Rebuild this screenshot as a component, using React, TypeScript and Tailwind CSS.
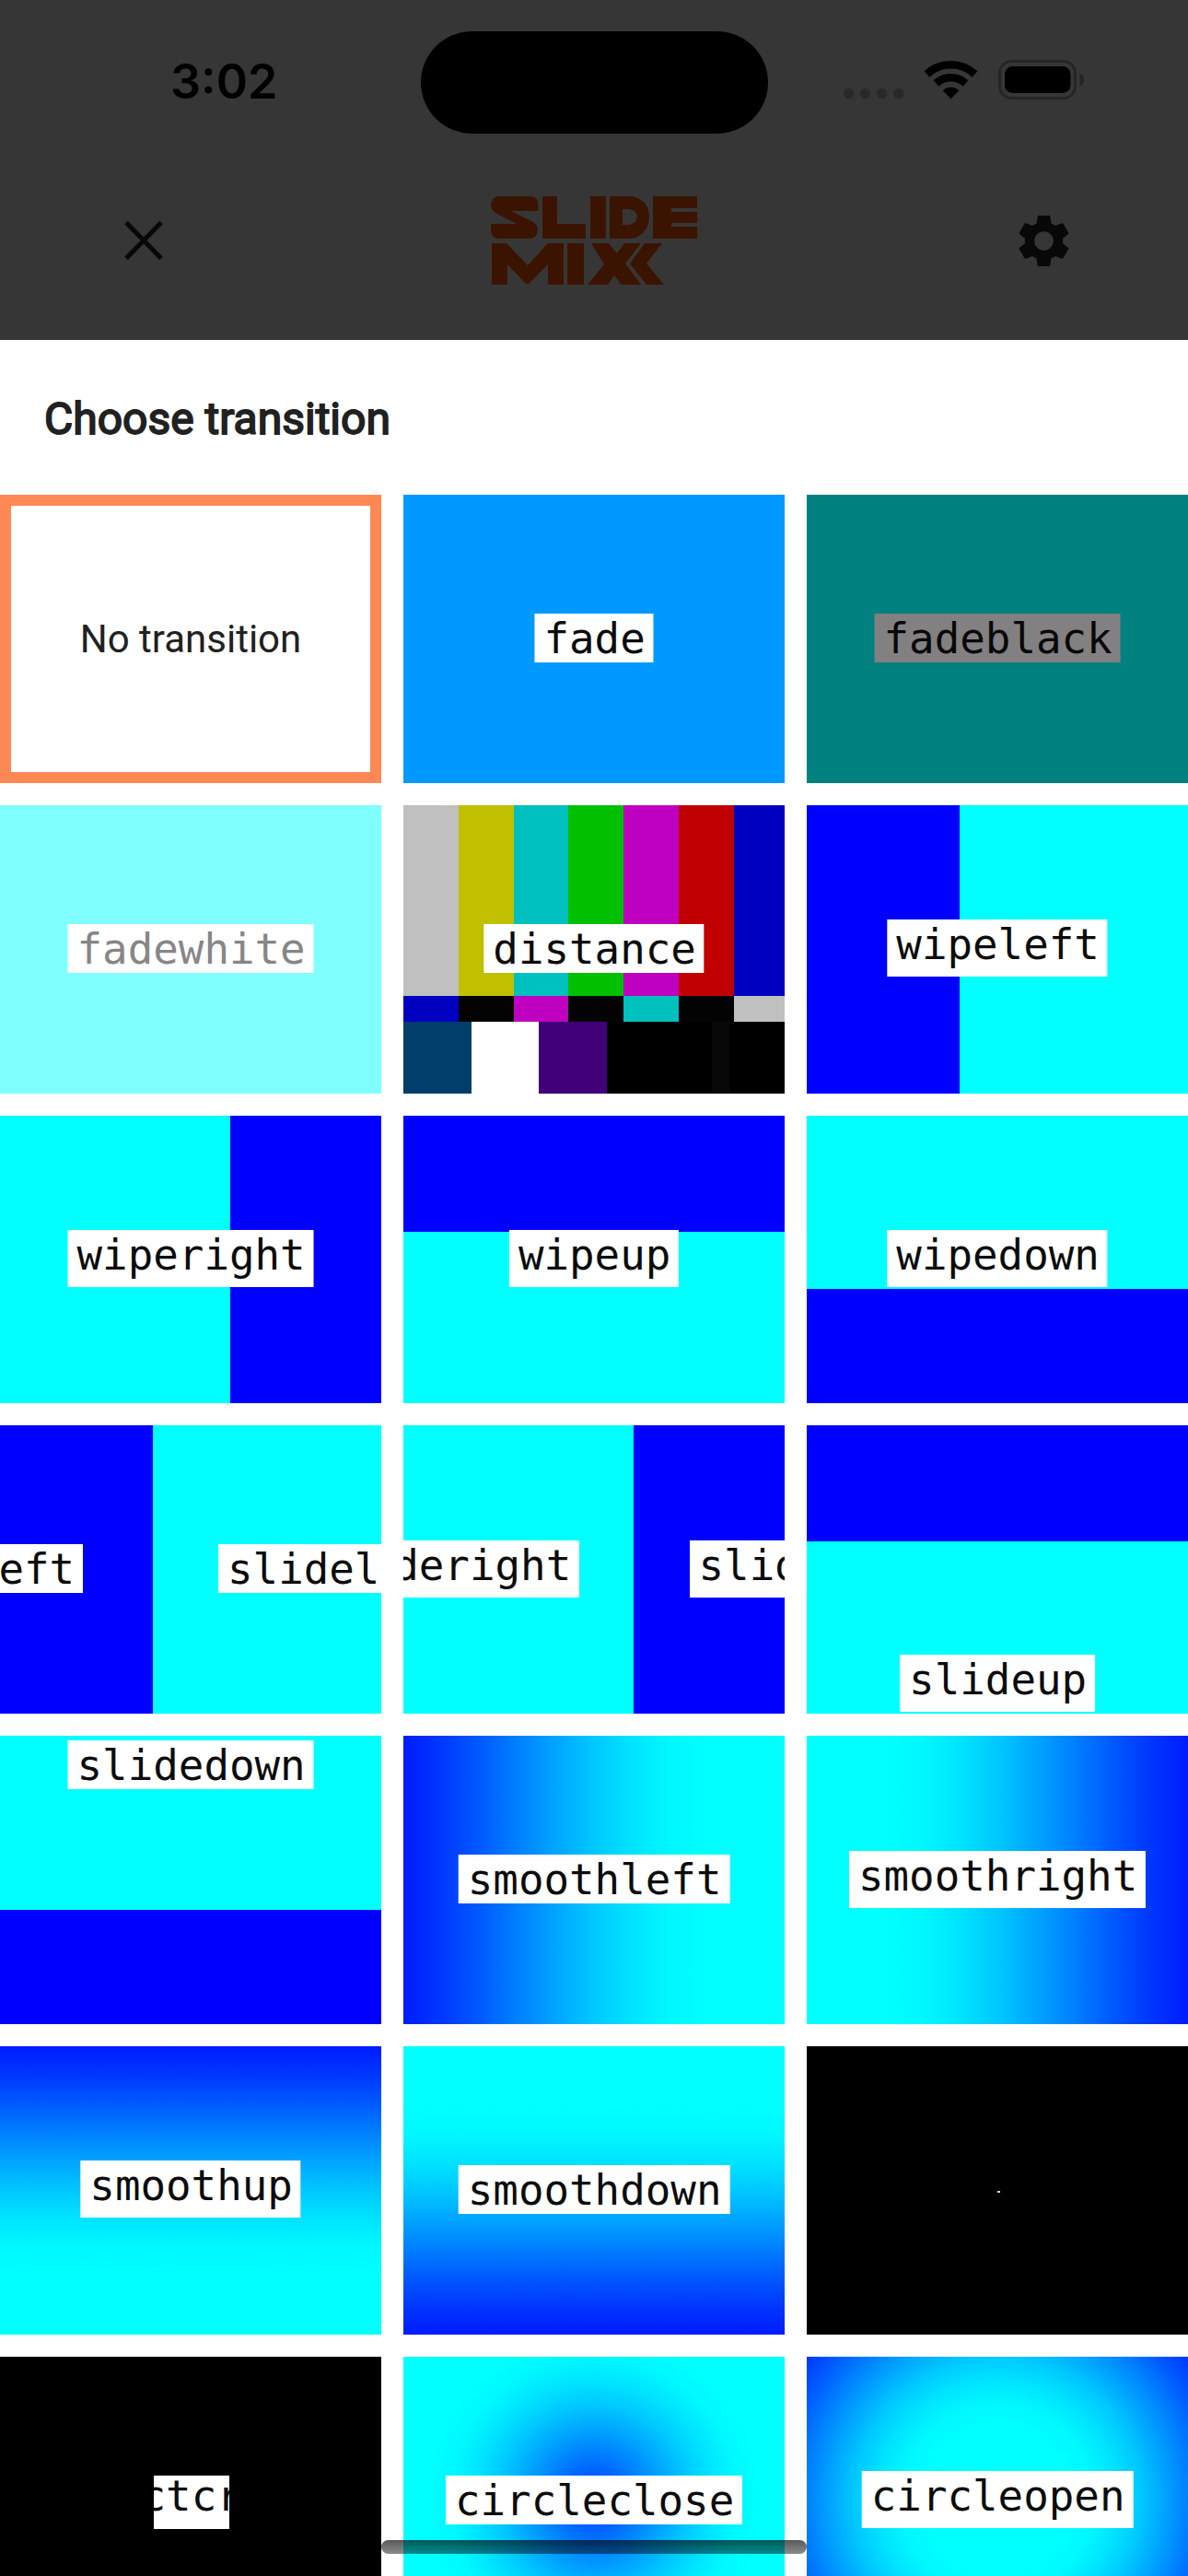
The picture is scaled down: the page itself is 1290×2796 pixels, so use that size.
import { MdSettings } from "react-icons/md";

type Tile = {
  background: string;
  labels?: { text: string; place: string; tone?: string }[];
};

const WHITE = "bg-white text-[#0c0c0c]";
const plain = "left-1/2 -translate-x-1/2 top-[129px] h-[53px]";
const deep = "left-1/2 -translate-x-1/2 top-[124.5px] h-[62px]";

const tiles: Tile[] = [
  { background: "bg-[#0099ff]", labels: [{ text: "fade", place: plain }] },
  {
    background: "bg-[#00807f]",
    labels: [{ text: "fadeblack", place: plain, tone: "bg-[#828081] text-[#080808]" }],
  },
  {
    background: "bg-[#80ffff]",
    labels: [{ text: "fadewhite", place: plain, tone: "bg-white text-[#868686]" }],
  },
  { background: "bars", labels: [{ text: "distance", place: plain }] },
  {
    background: "bg-[linear-gradient(to_right,#0000ff_165.7px,#00ffff_165.7px)]",
    labels: [{ text: "wipeleft", place: deep }],
  },
  {
    background: "bg-[linear-gradient(to_right,#00ffff_250.5px,#0000ff_250.5px)]",
    labels: [{ text: "wiperight", place: deep }],
  },
  {
    background: "bg-[linear-gradient(to_bottom,#0000ff_126px,#00ffff_126px)]",
    labels: [{ text: "wipeup", place: deep }],
  },
  {
    background: "bg-[linear-gradient(to_bottom,#00ffff_188.5px,#0000ff_188.5px)]",
    labels: [{ text: "wipedown", place: deep }],
  },
  {
    background: "bg-[linear-gradient(to_right,#0000ff_165.7px,#00ffff_165.7px)]",
    labels: [
      { text: "eft", place: "left-[-11.6px] top-[129px] h-[53px]" },
      { text: "slidel", place: "left-[237px] top-[129px] h-[53px]" },
    ],
  },
  {
    background: "bg-[linear-gradient(to_right,#00ffff_250.5px,#0000ff_250.5px)]",
    labels: [
      { text: "deright", place: "left-[-20.8px] top-[124.5px] h-[62px]" },
      { text: "slid", place: "left-[310.5px] top-[124.5px] h-[62px]" },
    ],
  },
  {
    background: "bg-[linear-gradient(to_bottom,#0000ff_126px,#00ffff_126px)]",
    labels: [{ text: "slideup", place: "left-1/2 -translate-x-1/2 top-[248.5px] h-[62px]" }],
  },
  {
    background: "bg-[linear-gradient(to_bottom,#00ffff_188.5px,#0000ff_188.5px)]",
    labels: [{ text: "slidedown", place: "left-1/2 -translate-x-1/2 top-[4.5px] h-[53px]" }],
  },
  {
    background:
      "bg-[linear-gradient(to_right,#001bff_0%,#0037ff_10%,#005aff_20%,#0080ff_30%,#00a5ff_40%,#00c8ff_50%,#00e4ff_60%,#00f8ff_70%,#00ffff_80%)]",
    labels: [{ text: "smoothleft", place: plain }],
  },
  {
    background:
      "bg-[linear-gradient(to_left,#001bff_0%,#0037ff_10%,#005aff_20%,#0080ff_30%,#00a5ff_40%,#00c8ff_50%,#00e4ff_60%,#00f8ff_70%,#00ffff_80%)]",
    labels: [{ text: "smoothright", place: deep }],
  },
  {
    background:
      "bg-[linear-gradient(to_bottom,#001bff_0%,#0037ff_10%,#005aff_20%,#0080ff_30%,#00a5ff_40%,#00c8ff_50%,#00e4ff_60%,#00f8ff_70%,#00ffff_80%)]",
    labels: [{ text: "smoothup", place: deep }],
  },
  {
    background:
      "bg-[linear-gradient(to_top,#001bff_0%,#0037ff_10%,#005aff_20%,#0080ff_30%,#00a5ff_40%,#00c8ff_50%,#00e4ff_60%,#00f8ff_70%,#00ffff_80%)]",
    labels: [{ text: "smoothdown", place: plain }],
  },
  { background: "dot" },
  { background: "crop" },
  {
    background:
      "bg-[radial-gradient(circle_at_center,#0037ff_0px,#005aff_26px,#0080ff_52px,#00a5ff_78px,#00c8ff_104px,#00e4ff_130px,#00f8ff_156px,#00ffff_181px)]",
    labels: [{ text: "circleclose", place: plain }],
  },
  {
    background:
      "bg-[radial-gradient(circle_at_center,#00ffff_78px,#00f8ff_104px,#00e4ff_130px,#00c8ff_156px,#00a5ff_181px,#0080ff_207px,#005aff_233px,#0037ff_259px)]",
    labels: [{ text: "circleopen", place: deep }],
  },
];

function Label({ text, place, tone = WHITE }: { text: string; place: string; tone?: string }) {
  return (
    <span
      className={`absolute whitespace-pre pl-[10px] pr-[8.8px] font-['DejaVu_Sans_Mono',monospace] text-[45.8px] leading-[55px] ${place} ${tone}`}
    >
      {text}
    </span>
  );
}

function ColorBars() {
  const top = ["bg-[#c0c0c0]", "bg-[#c0c000]", "bg-[#00c0c0]", "bg-[#00c000]", "bg-[#c000c0]", "bg-[#c00000]", "bg-[#0000c0]"];
  const middle = ["bg-[#0000c0]", "bg-[#030303]", "bg-[#c000c0]", "bg-[#030303]", "bg-[#00c0c0]", "bg-[#030303]", "bg-[#c0c0c0]"];
  const columns = "grid grid-cols-[60px_60px_59px_60px_60px_60px_1fr]";
  return (
    <div className="flex h-full flex-col">
      <div className={`h-[207px] ${columns}`}>
        {top.map((c, i) => (
          <div key={i} className={c} />
        ))}
      </div>
      <div className={`h-[28px] ${columns}`}>
        {middle.map((c, i) => (
          <div key={i} className={c} />
        ))}
      </div>
      <div className="grid flex-1 grid-cols-[73.7px_73.6px_73.7px_114px_19px_1fr]">
        <div className="bg-[#003e6b]" />
        <div className="bg-white" />
        <div className="bg-[#41007a]" />
        <div className="bg-black" />
        <div className="bg-[#080808]" />
        <div className="bg-black" />
      </div>
    </div>
  );
}

function TransitionTile({ tile }: { tile: Tile }) {
  if (tile.background === "dot") {
    return (
      <div className="flex items-center justify-center bg-black pl-[2px] pt-[3px]">
        <div className="h-[2px] w-[3px] bg-[#d8d8d8]" />
      </div>
    );
  }
  if (tile.background === "crop") {
    return (
      <div className="relative bg-black">
        <div className="absolute left-[167px] top-[129px] h-[58px] w-[81.5px] overflow-hidden bg-white">
          <Label text="ctcr" place="left-[-24.5px] top-[-4.500px] h-[63px]" />
        </div>
      </div>
    );
  }
  return (
    <div className={`relative overflow-hidden ${tile.background}`}>
      {tile.background === "bars" && <ColorBars />}
      {tile.labels?.map((l, i) => (
        <Label key={i} {...l} />
      ))}
    </div>
  );
}

function StatusIcons() {
  return (
    <svg className="absolute left-[900px] top-[50px]" width="300" height="70" viewBox="900 50 300 70">
      <g fill="#292929">
        <circle cx="921.5" cy="101.500" r="5.7" />
        <circle cx="939.5" cy="101.500" r="5.7" />
        <circle cx="957.5" cy="101.500" r="5.7" />
        <circle cx="975.7" cy="101.500" r="5.7" />
      </g>
      <g fill="none" stroke="#000" strokeWidth="8.6">
        <path d="M1006.5 80.5a38 38 0 0 1 52 0" />
        <path d="M1016.5 90.5a23.5 23.5 0 0 1 32 0" />
      </g>
      <path d="M1023.7 98.2a13.2 13.2 0 0 1 17.6 0l-8.8 9z" />
      <rect x="1085.500" y="66.5" width="82" height="40" rx="13" fill="none" stroke="#252525" strokeWidth="3" />
      <rect x="1091" y="72" width="71.5" height="29" rx="8.5" />
      <path d="M1172.500 80c6.5 2.5 6.5 11 0 13.5z" fill="#252525" />
    </svg>
  );
}

function Logo() {
  return (
    <svg className="relative left-[4px] top-[1px]" width="226" height="98" viewBox="0 0 226 98" fill="#3b1400">
      <path d="M8 0H43Q51 1 51.5 8V16H22L46 28Q51 31 51 37Q50 46 42 46H8Q0 45 0 37V30H28L5 18Q0 15 0 9Q1 1 8 0Z" />
      <path d="M56 0H72V30H103V46H56Z" />
      <path d="M108 0H125V46H108Z" />
      <path fillRule="evenodd" d="M129 0H153Q172 4 172 23Q171 42 153 46H129ZM143 14V31H150Q158 30 159 22Q158 15 150 14Z" />
      <path d="M176 0H224V13H196V17H224V29H196V33H224V46H176Z" />
      <path d="M1 51H17L40 75L62 51H79V96H62V74L41 95H38L18 74V96H1Z" />
      <path d="M83 51H101V96H83Z" />
      <path d="M109 51H128L137 62L145 51H163L146 73L163 96H142L134 86L127 96H105L123 74Z" />
      <path d="M167 51H186L169 73L188 96H169L151 73Z" />
    </svg>
  );
}

export default function App() {
  return (
    <div className="relative h-[2796px] w-[1290px] overflow-hidden bg-white font-['Roboto',sans-serif]">
      <header className="relative flex h-[369px] flex-col bg-[#363636]">
        <div className="relative flex h-[178px]">
          <div className="absolute left-[185px] top-[58px] font-['Inter',sans-serif] text-[52px] font-semibold leading-[62px] text-black">
            3:02
          </div>
          <div className="mx-auto mt-[33.5px] h-[111px] w-[377px] rounded-full bg-black" />
          <StatusIcons />
        </div>
        <div className="flex h-[166px] items-center justify-between pl-[128px] pr-[122px]">
          <svg width="56" height="56" viewBox="0 0 56 56" stroke="#080808" strokeWidth="5">
            <path d="M9 8.5L47 47.5M47 8.5L9 47.5" />
          </svg>
          <Logo />
          <MdSettings size={69} color="#080808" />
        </div>
      </header>
      <h1 className="flex h-[168px] items-center pl-[48px] pt-[3px] text-[48px] font-normal text-[#212121] [-webkit-text-stroke:1.8px_#212121]">
        Choose transition
      </h1>
      <main className="grid auto-rows-[312.75px] grid-cols-3 gap-[24px]">
        <div className="flex items-center justify-center border-[12px] border-[#ff8855] bg-white text-[42px] text-[#212121]">
          No transition
        </div>
        {tiles.map((tile, i) => (
          <TransitionTile key={i} tile={tile} />
        ))}
      </main>
      <div className="absolute left-[414px] top-[2757px] h-[15px] w-[462px] rounded-full bg-linear-to-b from-black/65 to-black/45" />
    </div>
  );
}
